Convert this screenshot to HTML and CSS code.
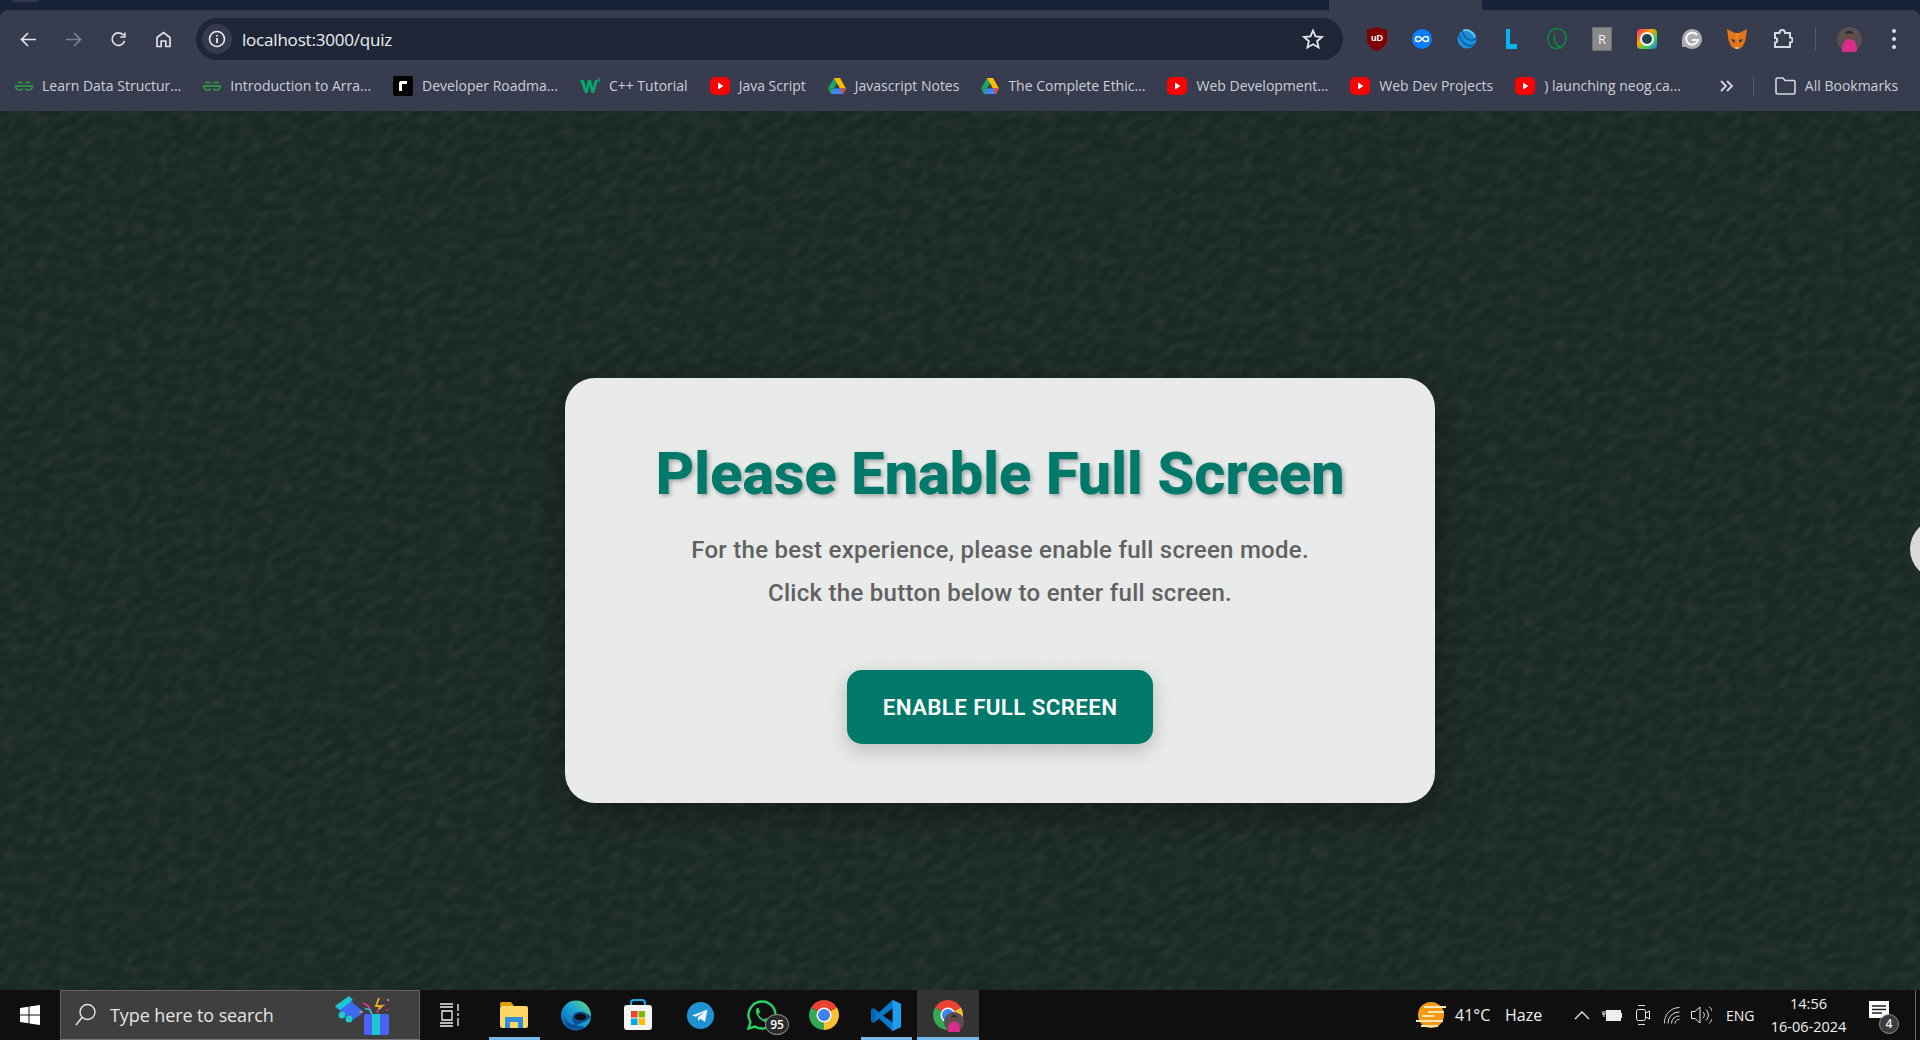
FILE: index.html
```html
<!DOCTYPE html>
<html lang="en">
<head>
<meta charset="utf-8">
<title>Quiz</title>
<link rel="stylesheet" href="styles.css">
</head>
<body>
<svg class="defs" width="0" height="0" aria-hidden="true">
  <defs>
    <symbol id="gfg" viewBox="0 0 18 10"><path d="M9 5H17.4A4 4 0 0 1 10.3 7.6M9 5H.6A4 4 0 0 0 7.7 7.6M10.3 2.4A4 4 0 0 1 15.5 2M7.7 2.4A4 4 0 0 0 2.5 2" fill="none" stroke="#2f8d46" stroke-width="1.800"/></symbol>
    <symbol id="yt" viewBox="0 0 20 18"><rect width="20" height="18" rx="5" fill="#f00"/><path d="M8 5.5 13.5 9 8 12.5z" fill="#fff"/></symbol>
    <symbol id="drive" viewBox="0 0 18 16"><path d="M6 0H12L6 10.500H0z" fill="#1fa463" transform="translate(0 0)"/><path d="M6 0H12L18 10.500H12z" fill="#ffba00"/><path d="M3.600 10.500H18L15 16H3z" fill="#4285f4"/><path d="M14 10.500H18L15 16 12.500 13z" fill="#ea4335"/><path d="M0 10.500H6L3 16z" fill="#1fa463"/></symbol>
    <symbol id="chrome" viewBox="0 0 40 40"><path d="M20 20 2.680 10A20 20 0 0 1 37.320 10Z" fill="#ea4335"/><path d="M20 20 37.320 10A20 20 0 0 1 20 40Z" fill="#fbc02d"/><path d="M20 20 20 40A20 20 0 0 1 2.680 10Z" fill="#34a853"/><circle cx="20" cy="20" r="10" fill="#fff"/><circle cx="20" cy="20" r="8" fill="#3f83f1"/></symbol>
    <symbol id="person" viewBox="0 0 25 25"><circle cx="12.500" cy="12.500" r="12.500" fill="#5a4f50"/><path d="M5 24C5 17 7 12 12.500 12S20 17 20 24A12.500 12.500 0 0 1 5 24z" fill="#d92c8d"/><circle cx="12.500" cy="8.500" r="3.500" fill="#6b4a3e"/><path d="M8.500 7.500C9 2.500 16 2.500 16.500 7.500C14 5.500 11 5.500 8.500 7.500z" fill="#23252a"/></symbol>
  </defs>
</svg>

<div class="tabstrip"><span class="tab-stub"></span><span class="tab-active"></span></div>

<header class="toolbar">
  <div class="navrow">
    <svg class="nav" viewBox="0 0 17 17"><path d="M8 2 1.500 8.500 8 15M2 8.500H16" fill="none" stroke="#dfe1e6" stroke-width="1.700"/></svg>
    <svg class="nav" viewBox="0 0 17 17"><path d="M9 2 15.500 8.500 9 15M15 8.500H1" fill="none" stroke="#7d818e" stroke-width="1.700"/></svg>
    <svg class="nav" viewBox="0 0 17 17"><path d="M14.500 10A6.300 6.300 0 1 1 13.500 4.300M14.800 1.500V6H10.300" fill="none" stroke="#dfe1e6" stroke-width="1.700"/></svg>
    <svg class="nav" viewBox="0 0 17 17"><path d="M2 15.500V6.500L8.500 1.500 15 6.500V15.500H10.800V10H6.200V15.500z" fill="none" stroke="#dfe1e6" stroke-width="1.700"/></svg>
    <div class="address">
      <span class="chip"><svg class="chip-icon" viewBox="0 0 18 18"><circle cx="9" cy="9" r="7.500" fill="none" stroke="#eceef2" stroke-width="1.600"/><path d="M9 8V13M9 5V6.500" stroke="#eceef2" stroke-width="1.800"/></svg></span>
      <span class="url">localhost:3000/quiz</span>
      <svg class="star" viewBox="0 0 22 22"><path d="M11 2.500 13.500 8.400 20 9 15.100 13.200 16.600 19.500 11 16.200 5.400 19.500 6.900 13.200 2 9 8.500 8.400z" fill="none" stroke="#e3e5ea" stroke-width="1.800"/></svg>
    </div>
    <div class="exts">
      <svg class="ext" viewBox="0 0 20 24"><path d="M10 0 20 3V12C20 18 15 22 10 24 5 22 0 18 0 12V3z" fill="#800000"/><text class="ext-t" x="10" y="13.500" text-anchor="middle">uD</text></svg>
      <svg class="ext" viewBox="0 0 20 24"><circle cx="10" cy="12" r="10" fill="#0a7cff"/><path d="M10 12C8 9.500 7 9.500 6 9.500A2.500 2.500 0 0 0 6 14.500C7 14.500 8 14.500 10 12 12 9.500 13 9.500 14 9.500A2.500 2.500 0 0 1 14 14.500C13 14.500 12 14.500 10 12z" fill="none" stroke="#fff" stroke-width="1.500"/></svg>
      <svg class="ext" viewBox="0 0 20 24"><circle cx="10" cy="12" r="9.500" fill="#1d8fd8"/><path d="M2 7C5 18 13 21 18 17M5 4C8 12 13 15 19 12" fill="none" stroke="#0a5f9e" stroke-width="1.500"/><path d="M6 3.500C11 1.500 16 5 18 10" fill="none" stroke="#7fd0f5" stroke-width="1.500"/></svg>
      <svg class="ext" viewBox="0 0 20 24"><path d="M4 2H8V17H15V22H4z" fill="#0ab4f0"/></svg>
      <svg class="ext" viewBox="0 0 20 24"><path d="M10 1.500C4 1.500 1 6.500 1 12S4 21.500 9 21.500 19 17 19 11 15 1.500 10 1.500zM8 8C5 13 10 20 15 21" fill="none" stroke="#0c8a3e" stroke-width="1.500"/></svg>
      <div class="ext ext-r">R</div>
      <svg class="ext" viewBox="0 0 20 24"><defs><linearGradient id="rb" x1="0" y1="0" x2="1" y2="1"><stop offset="0" stop-color="#f7267d"/><stop offset=".4" stop-color="#f7a600"/><stop offset=".7" stop-color="#36d05b"/><stop offset="1" stop-color="#2a6cf6"/></linearGradient></defs><rect y="2" width="20" height="20" rx="4" fill="url(#rb)"/><circle cx="10" cy="12" r="7" fill="#f4f6f8"/><circle cx="10" cy="12" r="5" fill="#21424f"/></svg>
      <svg class="ext" viewBox="0 0 20 24"><path d="M10 2A10 10 0 1 1 4 20H1.500A1.500 1.500 0 0 1 0 18.500V12A10 10 0 0 1 10 2z" fill="#a9abb1"/><path d="M15 8A6 6 0 1 0 16 13H10" fill="none" stroke="#f5f5f5" stroke-width="2.200"/></svg>
      <svg class="ext" viewBox="0 0 20 24"><path d="M0 2 8 6H12L20 2 18.500 13 16 19 12 22H8L4 19 1.500 13z" fill="#e2761b"/><path d="M4 12 8 13 7 16zM16 12 12 13 13 16z" fill="#233447"/><path d="M8 20H12L11 22H9z" fill="#d7c1b3"/><path d="M8 6H12L10 14z" fill="#f6851b"/></svg>
      <svg class="ext" viewBox="0 0 21 24"><path d="M3 6H7.500C7.500 2 13 2 13 6H18V10.500C21.500 10.500 21.500 15.500 18 15.500V20H3V15.500C6 15.500 6 11 3 11z" fill="none" stroke="#d5d9e2" stroke-width="2"/></svg>
    </div>
    <span class="vsep"></span>
    <svg class="avatar" viewBox="0 0 25 25"><use href="#person"/></svg>
    <svg class="dots" viewBox="0 0 6 22"><circle cx="3" cy="3" r="2" fill="#dfe1e6"/><circle cx="3" cy="11" r="2" fill="#dfe1e6"/><circle cx="3" cy="19" r="2" fill="#dfe1e6"/></svg>
  </div>
  <nav class="bookmarks">
    <a class="bm"><svg class="bi-gfg"><use href="#gfg"/></svg>Learn Data Structur...</a>
    <a class="bm"><svg class="bi-gfg"><use href="#gfg"/></svg>Introduction to Arra...</a>
    <a class="bm"><span class="bi-road"><span class="road-mark"></span></span>Developer Roadma...</a>
    <a class="bm"><svg class="bi-w3" viewBox="0 0 20 16"><path d="M0 2H4L6 10 8 2H11L13 10 15 2H18L14 15H11.500L9.500 7 7.500 15H5z" fill="#04aa6d"/><text class="w3-t" x="17.500" y="4">3</text></svg>C++ Tutorial</a>
    <a class="bm"><svg class="bi-yt"><use href="#yt"/></svg>Java Script</a>
    <a class="bm"><svg class="bi-drive"><use href="#drive"/></svg>Javascript Notes</a>
    <a class="bm"><svg class="bi-drive"><use href="#drive"/></svg>The Complete Ethic...</a>
    <a class="bm"><svg class="bi-yt"><use href="#yt"/></svg>Web Development...</a>
    <a class="bm"><svg class="bi-yt"><use href="#yt"/></svg>Web Dev Projects</a>
    <a class="bm"><svg class="bi-yt"><use href="#yt"/></svg>) launching neog.ca...</a>
    <svg class="more" viewBox="0 0 15 12"><path d="M2 1 7 6 2 11M8 1 13 6 8 11" fill="none" stroke="#d5d8df" stroke-width="1.800"/></svg>
    <span class="bsep"></span>
    <a class="bm all"><svg class="folder" viewBox="0 0 21 18"><path d="M1 15.500V2.500A1.500 1.500 0 0 1 2.500 1H8L10 3.500H18.500A1.500 1.500 0 0 1 20 5V15.500A1.500 1.500 0 0 1 18.500 17H2.500A1.500 1.500 0 0 1 1 15.500z" fill="none" stroke="#d5d8df" stroke-width="1.600"/></svg>All Bookmarks</a>
  </nav>
</header>

<main class="stage">
  <svg class="texture" aria-hidden="true">
    <filter id="weave" x="0" y="0" width="100%" height="100%">
      <feTurbulence type="fractalNoise" baseFrequency="0.07 0.14" numOctaves="2" seed="7"/>
      <feGaussianBlur stdDeviation="1.500"/>
      <feColorMatrix type="matrix" values="0 0 0 0 0.6  0 0 0 0 0.62  0 0 0 0 0.62  0.18 0 0 0 -0.07"/>
    </filter>
    <rect class="texture-fill" x="-600" y="-900" width="3200" height="2800" filter="url(#weave)" transform="rotate(-32 960 440)"/>
  </svg>
  <section class="card">
    <h1 class="title">Please Enable Full Screen</h1>
    <p class="lead">For the best experience, please enable full screen mode.<br>Click the button below to enter full screen.</p>
    <button class="cta">ENABLE FULL SCREEN</button>
  </section>
  <span class="edge-circle"></span>
</main>

<footer class="taskbar">
  <svg class="win" viewBox="0 0 20 20"><path d="M0 3 8.500 1.800V9.500H0zM9.500 1.600 20 0V9.500H9.500zM0 10.500H8.500V18.200L0 17zM9.500 10.500H20V20L9.500 18.400z" fill="#fff"/></svg>
  <div class="search">
    <svg class="lens" viewBox="0 0 21 24"><circle cx="12.500" cy="9" r="7.500" fill="none" stroke="#e6e6e6" stroke-width="1.400"/><path d="M7 14.500 1 22" stroke="#e6e6e6" stroke-width="1.500"/></svg>
    <span class="search-text">Type here to search</span>
    <svg class="gift" viewBox="0 0 55 40"><path d="M0 12 12 3 29 17 18 25z" fill="#3c6bf2"/><path d="M0 11 14 1 18 5 5 15z" fill="#1cc7cf"/><circle cx="7" cy="20" r="3.500" fill="#1cc7cf"/><circle cx="14" cy="24" r="3.500" fill="#1cc7cf"/><rect x="29" y="19" width="25" height="21" rx="2" fill="#4a62f5"/><rect x="37" y="19" width="8" height="21" fill="#1cc7cf"/><path d="M28 8C32 9 35 12 36 18M50 10C45 10 43 13 42 18" fill="none" stroke="#ec2f9b" stroke-width="1.600"/><path d="M30 14C33 13 36 15 37 19" fill="none" stroke="#1cc7cf" stroke-width="1.600"/><path d="M44 3 41 11H47L44 14" fill="none" stroke="#f2b01e" stroke-width="1.800"/><circle cx="53" cy="5" r="1" fill="#f2b01e"/><circle cx="26" cy="17" r="1.300" fill="#e08a2e"/><circle cx="52" cy="15" r="1" fill="#ec2f9b"/></svg>
  </div>
  <svg class="taskview" viewBox="0 0 20 24"><path d="M0 1H13M0 4H13M2 8H12V17H2zM0 20H13M0 23H13M18 1V8M18 10V13M18 15V23" fill="none" stroke="#f1f1f1" stroke-width="1.300"/></svg>
  <div class="apps">
    <div class="slot on">
      <svg class="app-explorer" viewBox="0 0 28 26"><path d="M0 2A2 2 0 0 1 2 0H11L14 4H0z" fill="#e0a100"/><rect y="4" width="28" height="22" rx="2" fill="#ffd766"/><path d="M5 26V15H23V26H18V20H10V26z" fill="#2f8fd8"/></svg>
    </div>
    <div class="slot">
      <svg class="app-icon" viewBox="0 0 31 31"><defs><linearGradient id="edge" x1="0" y1="1" x2="1" y2="0"><stop offset="0" stop-color="#0b57a4"/><stop offset=".55" stop-color="#1aa1d8"/><stop offset="1" stop-color="#6fe07a"/></linearGradient></defs><circle cx="15.500" cy="15.500" r="15.500" fill="url(#edge)"/><path d="M31 17C27 11 15 9 12 16 10 23 17 28 25 27 18 33 4 30 3 17 7 25 14 26 19 24 22 22 26 23 31 17z" fill="#0b4f94"/><ellipse cx="20" cy="17" rx="6" ry="3.500" fill="#0f0f0f"/></svg>
    </div>
    <div class="slot">
      <svg class="app-store" viewBox="0 0 28 32"><path d="M7 7V4A3 3 0 0 1 10 1H18A3 3 0 0 1 21 4V7" fill="none" stroke="#19a9e5" stroke-width="2"/><rect y="6" width="28" height="25" rx="3" fill="#f4f4f4"/><rect x="7" y="12" width="6.500" height="6.500" fill="#e8452c"/><rect x="14.500" y="12" width="6.500" height="6.500" fill="#7fba00"/><rect x="7" y="19.500" width="6.500" height="6.500" fill="#00a4ef"/><rect x="14.500" y="19.500" width="6.500" height="6.500" fill="#ffb900"/></svg>
    </div>
    <div class="slot">
      <svg class="app-tg" viewBox="0 0 27 27"><circle cx="13.500" cy="13.500" r="13.500" fill="#1f93d2"/><path d="M5 13.500 20.500 7.500 18 20 13.500 16.800 11.200 19 10.800 15.500 17 10 9 14.800z" fill="#eaf6fc"/></svg>
    </div>
    <div class="slot">
      <svg class="app-wa" viewBox="0 0 30 30"><path d="M15 1.500A13.500 13.500 0 1 1 8 26.500L1.500 28.500 3.500 22A13.500 13.500 0 0 1 15 1.500z" fill="none" stroke="#25d366" stroke-width="2.400"/><path d="M10 8C8 10 9 15 13 19 17 22.500 21 23 22.500 20.500L19 18 17 19.500C15 19 12 16 11.500 14L13 12 11.500 8z" fill="#25d366"/></svg>
      <span class="wa-badge">95</span>
    </div>
    <div class="slot">
      <svg class="app-chrome"><use href="#chrome"/></svg>
    </div>
    <div class="slot on">
      <svg class="app-icon" viewBox="0 0 30 31"><path d="M21.500 0 30 4V27L21.500 31 8 18.500 2.500 23 0 21V10L2.500 8 8 12.500z" fill="#0a78c9"/><path d="M21.500 0 30 4V27L21.500 31z" fill="#1f9cf0"/><path d="M21.500 8.500 12 15.500 21.500 22.500z" fill="#0f0f0f"/><path d="M2.500 8 5 15.500 2.500 23 0 21V10z" fill="#0a63a8"/></svg>
    </div>
    <div class="slot on active">
      <svg class="app-chrome"><use href="#chrome"/></svg>
      <svg class="app-person"><use href="#person"/></svg>
    </div>
  </div>
  <div class="tray">
    <svg class="weather" viewBox="0 0 30 26"><circle cx="15" cy="13" r="13" fill="#f59a12"/><path d="M8 5H30M12 10H28M6 14H18M0 19H27M5 24H22" stroke="#f6e7b7" stroke-width="2"/></svg>
    <span class="temp">41°C</span>
    <span class="haze">Haze</span>
    <svg class="caret" viewBox="0 0 16 10"><path d="M1 9 8 2 15 9" fill="none" stroke="#eee" stroke-width="1.300"/></svg>
    <svg class="battery" viewBox="0 0 20 14"><path d="M0 6H3M1 3V6M3 3V6M2 6V9" stroke="#eee" stroke-width="1"/><rect x="4.500" y="2.500" width="14" height="10" fill="#eee" stroke="#eee"/><rect x="19" y="5" width="1" height="5" fill="#eee"/></svg>
    <svg class="video" viewBox="0 0 14 22"><path d="M2 1.500H9M2 20.500H9" stroke="#ddd" stroke-width="1"/><rect x=".5" y="5.500" width="9" height="11" rx="2" fill="none" stroke="#eee"/><path d="M9.500 9 13.500 7V15L9.500 13" fill="none" stroke="#eee"/></svg>
    <svg class="wifi" viewBox="0 0 16 18"><path d="M.5 17.500A15 15 0 0 1 15.500 1.500M4 17.500A11 11 0 0 1 15.500 6M7.500 17.500A7.500 7.500 0 0 1 15.500 10M11 17.500A4 4 0 0 1 15.500 13.500" fill="none" stroke="#ddd"/></svg>
    <svg class="speaker" viewBox="0 0 21 20"><path d="M.5 6.500H4L9 2V18L4 13.500H.5z" fill="none" stroke="#eee"/><path d="M12 7A4 4 0 0 1 12 13M15 4.500A7.500 7.500 0 0 1 15 15.500M18 1.500A11 11 0 0 1 18 18.500" fill="none" stroke="#ddd"/></svg>
    <span class="lang">ENG</span>
    <div class="clock"><span>14:56</span><span>16-06-2024</span></div>
    <div class="notify">
      <svg class="note" viewBox="0 0 20 18"><path d="M0 0H20V17H0z" fill="#fff"/><path d="M3 5H17M3 8.500H17M3 12H13" stroke="#222" stroke-width="1.300"/></svg>
      <span class="note-badge">4</span>
    </div>
    <span class="show-desktop"></span>
  </div>
</footer>
</body>
</html>
```
FILE: styles.css
```css
* { box-sizing: border-box; }
html, body { margin: 0; height: 100%; }
body {
  width: 1920px;
  height: 1040px;
  overflow: hidden;
  display: flex;
  flex-direction: column;
  background: #1b2a27;
  font-family: "Open Sans", "Noto Sans", sans-serif;
}
.defs { display: block; height: 0; width: 0; }

.tabstrip {
  height: 10px;
  flex: none;
  background: #18223a;
  display: flex;
}
.tab-stub { width: 27px; height: 2px; margin-left: 12px; background: #2f3649; border-radius: 0 0 6px 6px; }
.tab-active { width: 153px; margin-left: 1290px; background: #373c4f; border-radius: 0 0 0 0; }

.toolbar {
  height: 101px;
  flex: none;
  background: #373c4f;
  border-radius: 8px 8px 0 0;
}
.navrow {
  display: flex;
  align-items: center;
  height: 50px;
  padding: 8px 0 0 20px;
}
.nav { width: 17px; height: 17px; margin-right: 28px; flex: none; }
.nav:nth-of-type(4) { margin-right: 24px; }
.address {
  width: 1147px;
  height: 42px;
  flex: none;
  display: flex;
  align-items: center;
  background: #1f2637;
  border-radius: 21px;
  padding: 0 19px 0 6px;
}
.chip {
  width: 30px;
  height: 30px;
  flex: none;
  display: flex;
  align-items: center;
  justify-content: center;
  background: #353a4c;
  border-radius: 50%;
}
.chip-icon { width: 18px; height: 18px; }
.url { margin-left: 10px; font-size: 17px; color: #eef0f3; flex: 1; letter-spacing: -.2px; }
.star { width: 22px; height: 22px; flex: none; }
.exts { display: flex; gap: 25px; margin-left: 24px; flex: none; }
.ext { width: 20px; height: 24px; flex: none; display: block; }
.ext:nth-child(10) { width: 21px; }
.ext-t { font: 700 9px "Liberation Sans", sans-serif; fill: #fff; }
.ext-r {
  background: #8a8a8a;
  border: 1px solid #6f6f6f;
  color: #f2f2f2;
  font: 400 13px/22px "Open Sans", sans-serif;
  text-align: center;
  height: 24px;
}
.vsep { width: 1px; height: 24px; background: #545969; margin-left: 22px; flex: none; }
.avatar { width: 25px; height: 25px; margin-left: 21px; flex: none; }
.dots { width: 6px; height: 22px; margin-left: 29px; flex: none; }

.bookmarks {
  display: flex;
  align-items: center;
  height: 51px;
  padding-left: 15px;
  font-size: 14px;
  color: #cdd0d7;
}
.bm { display: flex; align-items: center; white-space: nowrap; margin-right: 22px; }
.bm svg, .bm .bi-road { margin-right: 9px; flex: none; }
.bi-gfg { width: 18px; height: 10px; }
.bi-road {
  width: 20px;
  height: 20px;
  background: #000;
  border-radius: 2px;
  position: relative;
  display: block;
}
.road-mark {
  position: absolute;
  left: 6px;
  top: 5px;
  width: 8px;
  height: 10px;
  border-left: 3px solid #fff;
  border-top: 3px solid #fff;
  border-radius: 3px 0 0 0;
}
.bi-w3 { width: 20px; height: 16px; margin-right: 6px; }
.w3-t { font: 700 5px "Liberation Sans", sans-serif; fill: #04aa6d; }
.bi-yt { width: 20px; height: 18px; }
.bi-drive { width: 18px; height: 16px; }
.more { width: 15px; height: 12px; flex: none; margin-left: 16px; }
.bsep { width: 1px; height: 20px; background: #555a6a; margin-left: 19px; flex: none; }
.all { margin: 0 0 0 21px; }
.folder { width: 21px; height: 18px; }

.stage {
  flex: 1;
  position: relative;
  isolation: isolate;
  overflow: hidden;
  display: flex;
  align-items: flex-start;
  justify-content: center;
  padding: 267px 0 0 80px;
  background: #1a2826;
}
.texture { position: absolute; inset: 0; width: 100%; height: 100%; z-index: -1; }
.texture-fill { fill: #000; }

.card {
  width: 870px;
  height: 425px;
  padding-top: 58px;
  text-align: center;
  background: rgba(255, 255, 255, .9);
  border-radius: 30px;
  box-shadow: 0 10px 30px rgba(0, 0, 0, .3);
}
.title {
  margin: 0 0 18px;
  font: 800 60px/75px Roboto, sans-serif;
  color: #00796b;
  text-shadow: 2px 2px 4px rgba(0, 0, 0, .3);
  letter-spacing: -.33px;
}
.lead {
  margin: 0 0 55px;
  font: 500 24px/43.2px Roboto, sans-serif;
  color: #616161;
  letter-spacing: .27px;
}
.cta {
  width: 306px;
  height: 74px;
  border: 0;
  border-radius: 15px;
  background: #00796b;
  color: #fff;
  font: 600 22.4px Roboto, sans-serif;
  letter-spacing: .34px;
  box-shadow: 0 6px 20px rgba(0, 0, 0, .2);
  padding: 0;
}
.edge-circle {
  position: absolute;
  left: 1910px;
  top: 408px;
  width: 60px;
  height: 60px;
  border-radius: 50%;
  background: #d9d9d9;
}

.taskbar {
  height: 50px;
  flex: none;
  display: flex;
  align-items: center;
  background: #0f0f0f;
  color: #f1f1f1;
}
.win { width: 20px; height: 20px; margin-left: 20px; flex: none; }
.search {
  width: 360px;
  height: 50px;
  margin-left: 20px;
  flex: none;
  display: flex;
  align-items: center;
  background: #3f3f3f;
  border: 1px solid #616161;
  border-bottom-color: #767676;
  padding-left: 14px;
}
.lens { width: 21px; height: 24px; flex: none; }
.search-text { margin-left: 14px; font-size: 18px; color: #e4e4e4; flex: 1; letter-spacing: -.1px; }
.gift { width: 55px; height: 40px; margin-right: 29px; flex: none; }
.taskview { width: 20px; height: 24px; margin-left: 20px; flex: none; }
.apps { display: flex; margin-left: 23px; height: 50px; flex: none; }
.slot {
  width: 62px;
  height: 50px;
  position: relative;
  display: flex;
  align-items: center;
  justify-content: center;
}
.slot.on::after {
  content: "";
  position: absolute;
  left: 6px;
  right: 5px;
  bottom: 0;
  height: 3px;
  background: #76b9ed;
}
.slot.active { background: #333; }
.slot.active::after { left: 0; right: 0; }
.app-explorer { width: 28px; height: 26px; }
.app-icon { width: 30px; height: 31px; }
.app-store { width: 28px; height: 32px; }
.app-tg { width: 27px; height: 27px; }
.app-wa { width: 30px; height: 30px; }
.app-chrome { width: 30px; height: 30px; }
.app-person { position: absolute; left: 27px; top: 22px; width: 20px; height: 20px; }
.wa-badge {
  position: absolute;
  left: 34px;
  top: 24px;
  width: 24px;
  height: 21px;
  border-radius: 50%;
  background: #2a2a2a;
  border: 1px solid #8a8a8a;
  color: #fff;
  font-size: 12px;
  line-height: 19px;
  text-align: center;
  font-weight: 600;
}
.tray { margin-left: auto; display: flex; align-items: center; height: 50px; flex: none; }
.weather { width: 30px; height: 26px; flex: none; }
.temp { margin-left: 9px; font-size: 16px; width: 38px; white-space: nowrap; }
.haze { margin-left: 12px; font-size: 16px; width: 38px; }
.caret { width: 16px; height: 10px; margin-left: 31px; flex: none; }
.battery { width: 20px; height: 14px; margin-left: 12px; flex: none; }
.video { width: 14px; height: 22px; margin-left: 14px; flex: none; }
.wifi { width: 16px; height: 18px; margin-left: 14px; flex: none; }
.speaker { width: 21px; height: 20px; margin-left: 11px; flex: none; }
.lang { margin-left: 14px; font-size: 14px; width: 28px; white-space: nowrap; }
.clock {
  margin-left: 17px;
  width: 75px;
  display: flex;
  flex-direction: column;
  align-items: center;
  gap: 5px;
  font-size: 14.5px;
  line-height: 18px;
  white-space: nowrap;
}
.notify { position: relative; width: 20px; height: 30px; margin-left: 23px; flex: none; }
.note { width: 20px; height: 18px; display: block; margin-top: 1px; }
.note-badge {
  position: absolute;
  left: 10px;
  top: 14px;
  width: 20px;
  height: 20px;
  border-radius: 50%;
  background: #3c3c3c;
  border: 1px solid #8a8a8a;
  font-size: 12px;
  line-height: 18px;
  text-align: center;
  font-weight: 600;
}
.show-desktop { width: 1px; height: 50px; margin: 0 4px 0 26px; background: #666; flex: none; }
```
